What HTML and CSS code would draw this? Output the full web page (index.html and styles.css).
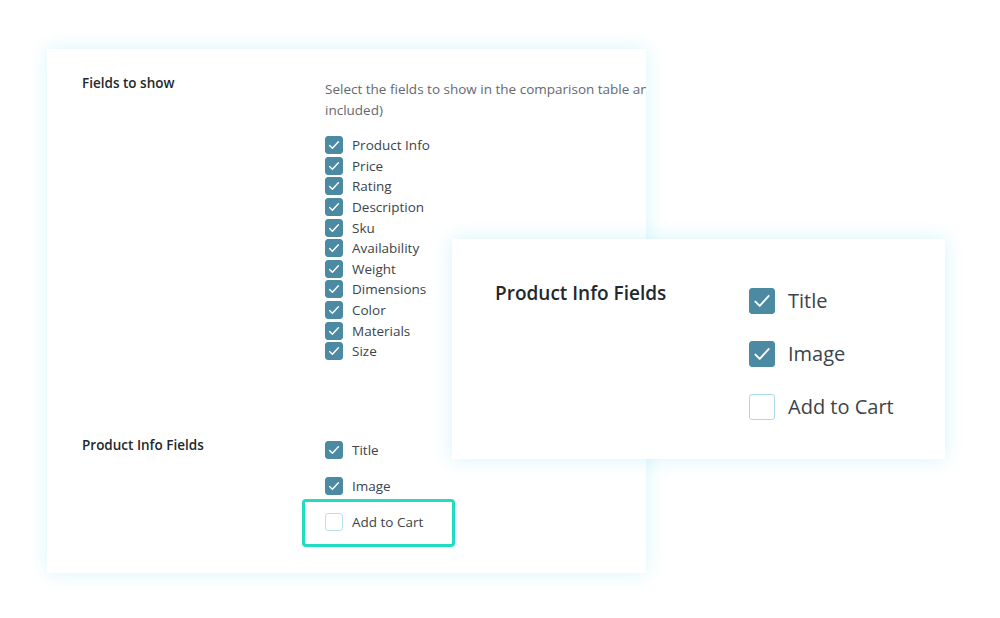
FILE: index.html
```html
<!DOCTYPE html>
<html lang="en">
<head>
    <meta charset="UTF-8">
    <meta name="viewport" content="width=device-width, initial-scale=1.0">
    <title>Comparison Fields</title>
    <link rel="stylesheet" href="styles.css">
</head>
<body>

    <div class="settings-card">
        <div class="setting-row fields-row">
            <div class="setting-label">Fields to show</div>
            <div class="setting-body">
                <p class="setting-desc"><span class="desc-line">Select the fields to show in the comparison table and order them (product info is always</span><br>included)</p>
                <ul class="check-list">
                    <li><span class="box checked"></span>Product Info</li>
                    <li><span class="box checked"></span>Price</li>
                    <li><span class="box checked"></span>Rating</li>
                    <li><span class="box checked"></span>Description</li>
                    <li><span class="box checked"></span>Sku</li>
                    <li><span class="box checked"></span>Availability</li>
                    <li><span class="box checked"></span>Weight</li>
                    <li><span class="box checked"></span>Dimensions</li>
                    <li><span class="box checked"></span>Color</li>
                    <li><span class="box checked"></span>Materials</li>
                    <li><span class="box checked"></span>Size</li>
                </ul>
            </div>
        </div>

        <div class="setting-row info-row">
            <div class="setting-label">Product Info Fields</div>
            <ul class="check-list spaced">
                <li><span class="box checked"></span>Title</li>
                <li><span class="box checked"></span>Image</li>
                <li class="marked"><span class="box"></span>Add to Cart<span class="highlight"></span></li>
            </ul>
        </div>
    </div>

    <!-- zoomed copy of the product info block -->
    <div class="zoom-card">
        <div class="zoom-label">Product Info Fields</div>
        <ul class="check-list big">
            <li><span class="box checked"></span>Title</li>
            <li><span class="box checked"></span>Image</li>
            <li><span class="box"></span>Add to Cart</li>
        </ul>
    </div>

</body>
</html>
```

FILE: styles.css
```css
body {
    margin: 0;
    background-color: #ffffff;
    font-family: "Open Sans", "Noto Sans", Arial, sans-serif;
    color: #3c434a;
    position: relative;
    width: 1000px;
    height: 618px;
    overflow: hidden;
}

.settings-card {
    margin: 49px 0 0 47px;
    width: 599px;
    height: 524px;
    box-sizing: border-box;
    background-color: #ffffff;
    box-shadow: 0 0 18px rgba(120, 215, 235, 0.28);
    padding: 27px 0 0 35px;
    overflow: hidden;
}

.setting-row {
    display: flex;
}

.setting-label {
    width: 243px;
    flex-shrink: 0;
    font-size: 13.5px;
    font-weight: 600;
    color: #23282d;
    line-height: 14px;
}

.setting-body {
    width: 321px;
    flex-shrink: 0;
    overflow: hidden;
}

.setting-desc {
    margin: 3px 0 0 0;
    font-size: 13.5px;
    line-height: 21px;
    color: #646970;
}

.desc-line {
    white-space: nowrap;
}

.check-list {
    list-style: none;
    margin: 14px 0 0 0;
    padding: 0;
    font-size: 13.5px;
}

.check-list li {
    display: flex;
    align-items: center;
    height: 20.6px;
    white-space: nowrap;
}

.box {
    width: 18px;
    height: 18px;
    box-sizing: border-box;
    border-radius: 3px;
    border: 1px solid #b8e0ef;
    background-color: #ffffff;
    margin-right: 9px;
    flex-shrink: 0;
}

.box.checked {
    border-color: #4b8aa2;
    background-color: #4b8aa2;
    background-image: url("data:image/svg+xml,%3Csvg xmlns='http://www.w3.org/2000/svg' viewBox='0 0 20 20'%3E%3Cpath d='M4.5 10.5l3.5 3.5 7.5-8' fill='none' stroke='%23ffffff' stroke-width='1.8' stroke-linecap='round' stroke-linejoin='round'/%3E%3C/svg%3E");
    background-size: 100% 100%;
}

.info-row {
    margin-top: 76px;
}

.check-list.spaced {
    margin-top: -6px;
}

.check-list.spaced li {
    height: 36px;
}

.marked {
    position: relative;
}

.highlight {
    position: absolute;
    left: -23px;
    top: -5px;
    width: 153px;
    height: 48px;
    box-sizing: border-box;
    border: 3px solid #1fdcc3;
    border-radius: 4px;
}

.zoom-card {
    position: absolute;
    left: 452px;
    top: 239px;
    width: 493px;
    height: 220px;
    box-sizing: border-box;
    background-color: #ffffff;
    box-shadow: 0 0 18px rgba(120, 215, 235, 0.3);
    display: flex;
    padding: 43px 0 0 43px;
}

.zoom-label {
    width: 254px;
    flex-shrink: 0;
    font-size: 19px;
    font-weight: 600;
    color: #23282d;
    line-height: 22px;
}

.check-list.big {
    margin-top: -8px;
    font-size: 20px;
}

.check-list.big li {
    height: 53px;
}

.check-list.big .box {
    width: 26px;
    height: 26px;
    border-radius: 3px;
    margin-right: 13px;
    border-color: #a9d8ea;
}

.check-list.big .box.checked {
    border-color: #4b8aa2;
    background-image: url("data:image/svg+xml,%3Csvg xmlns='http://www.w3.org/2000/svg' viewBox='0 0 20 20'%3E%3Cpath d='M4.5 10.5l3.6 3.6 7.4-8.2' fill='none' stroke='%23ffffff' stroke-width='1.6' stroke-linecap='round' stroke-linejoin='round'/%3E%3C/svg%3E");
}
```
